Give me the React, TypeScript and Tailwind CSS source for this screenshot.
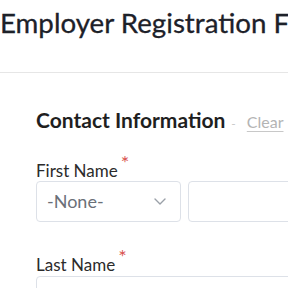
import React from "react";

function Chevron() {
  return (
    <svg width="12" height="7" viewBox="0 0 12 7" fill="none">
      <path d="M1 1l5 5 5-5" stroke="#9aa0a8" strokeWidth="1.4" strokeLinecap="round" strokeLinejoin="round" />
    </svg>
  );
}

function Label({ text }: { text: string }) {
  return (
    <div className="h-[20px] text-[17px] leading-[20px] text-[#2b2b2b] whitespace-nowrap">
      {text}
      <span className="relative top-[-7px] ml-[3px] text-[20px] text-[#d9534f]">*</span>
    </div>
  );
}

export default function App() {
  return (
    <div className="w-[288px] h-[288px] overflow-hidden bg-white" style={{ fontFamily: "Lato, 'Noto Sans', sans-serif" }}>
      <div className="pt-[6px] h-[40px] text-[27.7px] leading-[34px] text-[#1d2129] whitespace-nowrap [-webkit-text-stroke:0.3px_#1d2129]">
        Employer Registration Form
      </div>
      <div className="mt-[32px] h-px bg-[#e6e6e6]" />
      <div className="pl-[36px]">
        <div className="mt-[35px] h-[24px] flex items-baseline whitespace-nowrap">
          <span className="text-[21px] leading-[24px] font-bold text-[#1f1f1f]">Contact Information</span>
          <span className="ml-[6px] text-[12px] text-[#c8c8c8]">-</span>
          <span className="ml-[11px] text-[16px] text-[#b4b4b4] underline underline-offset-[3px] decoration-[#c8c8c8]">Clear</span>
        </div>
        <div className="mt-[27px]">
          <Label text="First Name" />
        </div>
        <div className="mt-[2px] flex gap-[7px]">
          <div className="w-[145px] h-[41px] shrink-0 rounded-[4px] border border-[#dde1e8] flex items-center justify-between pl-[10px] pr-[14px]">
            <span className="text-[18px] text-[#6b7078]">-None-</span>
            <Chevron />
          </div>
          <div className="w-[200px] h-[41px] shrink-0 rounded-[4px] border border-[#dde1e8]" />
        </div>
        <div className="mt-[31px]">
          <Label text="Last Name" />
        </div>
        <div className="mt-[3px] w-[300px] h-[41px] rounded-[4px] border border-[#dde1e8]" />
      </div>
    </div>
  );
}
